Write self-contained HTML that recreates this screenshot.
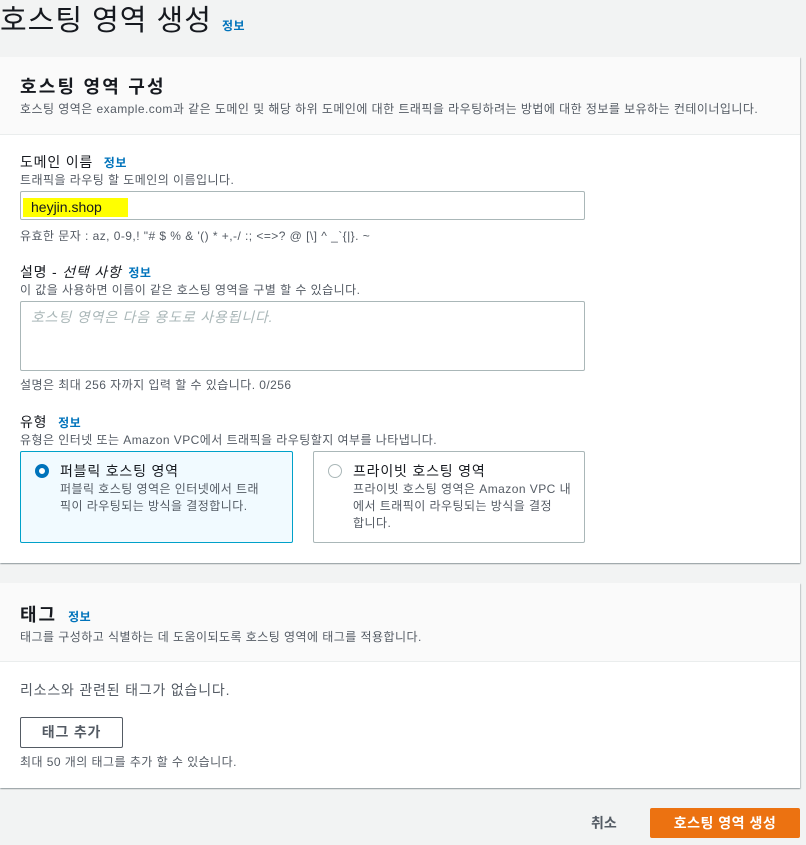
<!DOCTYPE html>
<html><head><meta charset="utf-8"><style>
*{box-sizing:border-box;margin:0;padding:0}
body{width:806px;height:845px;background:#f2f3f3;position:relative;overflow:hidden;font-family:"Liberation Sans","Noto Sans CJK KR",sans-serif;color:#16191f}
.a{position:absolute;white-space:nowrap}
.s{font-size:12px;color:#545b64;letter-spacing:0.45px}
.l{font-size:14px;letter-spacing:0.8px}
.i{color:#0073bb;font-weight:bold;font-size:12px;letter-spacing:0.5px}
.panel{position:absolute;left:0;width:800px;background:#fff;box-shadow:0 1px 1px rgba(0,28,36,.3),1px 1px 1px rgba(0,28,36,.15)}
.hd{position:absolute;left:0;top:0;width:100%;background:#fafafa;border-bottom:1px solid #eaeded}
.box{position:absolute;border:1px solid #aab7b8;background:#fff;border-radius:2px}
</style></head><body>
<div class="a" style="left:0;top:1px;font-size:29px;line-height:40px;letter-spacing:1px">호스팅 영역 생성</div>
<div class="a i" style="left:222px;top:17px">정보</div>

<div class="panel" style="top:57px;height:506px">
  <div class="hd" style="height:78px"></div>
  <div class="a" style="left:20px;top:16px;font-size:18px;font-weight:bold;letter-spacing:2.2px">호스팅 영역 구성</div>
  <div class="a s" style="left:20px;top:43px">호스팅 영역은 example.com과 같은 도메인 및 해당 하위 도메인에 대한 트래픽을 라우팅하려는 방법에 대한 정보를 보유하는 컨테이너입니다.</div>
  <div class="a l" style="left:20px;top:95px">도메인 이름 <span class="i" style="margin-left:6px">정보</span></div>
  <div class="a s" style="left:20px;top:114px">트래픽을 라우팅 할 도메인의 이름입니다.</div>
  <div class="box" style="left:20px;top:134px;width:565px;height:29px"></div>
  <div class="a" style="left:23px;top:141px;width:105px;height:19px;background:#ffff00"></div>
  <div class="a" style="left:31px;top:142px;font-size:14px">heyjin.shop</div>
  <div class="a s" style="left:20px;top:170px">유효한 문자 : az, 0-9,! "# $ % &amp; '() * +,-/ :; &lt;=&gt;? @ [\] ^ _`{|}. ~</div>
  <div class="a l" style="left:20px;top:205px">설명 - <i>선택 사항</i> <span class="i" style="margin-left:2px">정보</span></div>
  <div class="a s" style="left:20px;top:224px">이 값을 사용하면 이름이 같은 호스팅 영역을 구별 할 수 있습니다.</div>
  <div class="box" style="left:20px;top:244px;width:565px;height:70px"></div>
  <div class="a" style="left:31px;top:250px;font-size:14px;color:#aab7b8;font-style:italic;letter-spacing:0.8px">호스팅 영역은 다음 용도로 사용됩니다.</div>
  <div class="a s" style="left:20px;top:319px">설명은 최대 256 자까지 입력 할 수 있습니다. 0/256</div>
  <div class="a l" style="left:20px;top:355px">유형 <span class="i" style="margin-left:6px">정보</span></div>
  <div class="a s" style="left:20px;top:374px">유형은 인터넷 또는 Amazon VPC에서 트래픽을 라우팅할지 여부를 나타냅니다.</div>
  <div class="a" style="left:20px;top:394px;width:273px;height:92px;border:1px solid #00a1c9;background:#f1faff;border-radius:2px"></div>
  <div class="a" style="left:35px;top:407px;width:14px;height:14px;border-radius:50%;border:4px solid #0073bb;background:#fff"></div>
  <div class="a l" style="left:60px;top:404px">퍼블릭 호스팅 영역</div>
  <div class="a s" style="left:60px;top:424px;line-height:17px">퍼블릭 호스팅 영역은 인터넷에서 트래<br>픽이 라우팅되는 방식을 결정합니다.</div>
  <div class="a" style="left:313px;top:394px;width:272px;height:92px;border:1px solid #aab7b8;background:#fff;border-radius:2px"></div>
  <div class="a" style="left:328px;top:407px;width:14px;height:14px;border-radius:50%;border:1px solid #aab7b8;background:#fff"></div>
  <div class="a l" style="left:353px;top:404px">프라이빗 호스팅 영역</div>
  <div class="a s" style="left:353px;top:424px;line-height:17px">프라이빗 호스팅 영역은 Amazon VPC 내<br>에서 트래픽이 라우팅되는 방식을 결정<br>합니다.</div>
</div>

<div class="panel" style="top:583px;height:205px">
  <div class="hd" style="height:79px"></div>
  <div class="a" style="left:20px;top:18px;font-size:18px;font-weight:bold;letter-spacing:2px">태그 <span class="i" style="margin-left:4px;font-size:12px">정보</span></div>
  <div class="a s" style="left:20px;top:45px">태그를 구성하고 식별하는 데 도움이되도록 호스팅 영역에 태그를 적용합니다.</div>
  <div class="a l" style="left:20px;top:97px;color:#545b64">리소스와 관련된 태그가 없습니다.</div>
  <div class="a" style="left:20px;top:134px;width:103px;height:31px;border:1px solid #545b64;border-radius:2px;font-size:14px;font-weight:bold;color:#545b64;text-align:center;line-height:29px;letter-spacing:0.8px">태그 추가</div>
  <div class="a s" style="left:20px;top:170px">최대 50 개의 태그를 추가 할 수 있습니다.</div>
</div>

<div class="a" style="left:591px;top:813px;font-size:14px;font-weight:bold;color:#545b64">취소</div>
<div class="a" style="left:650px;top:808px;width:150px;height:30px;background:#ec7211;border-radius:2px;color:#fff;font-size:14px;font-weight:bold;text-align:center;line-height:30px;letter-spacing:0.5px">호스팅 영역 생성</div>
</body></html>
